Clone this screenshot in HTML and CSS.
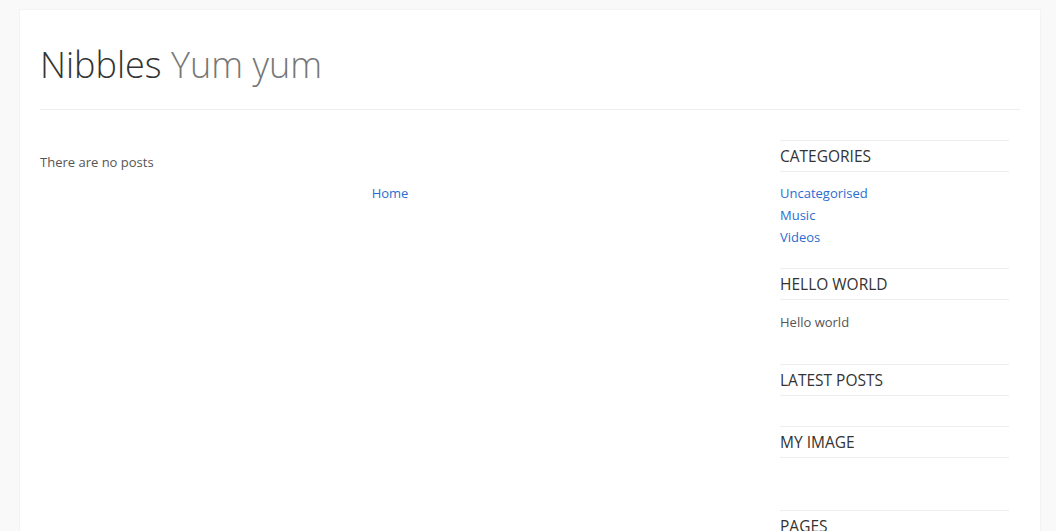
FILE: index.html
```html
<!DOCTYPE html>
<html>
    <head>
        <title>Nibbles Yum yum</title>
        <link rel="stylesheet" href="styles.css">
    </head>
<body>
    <div class="container">
        <header class="site-header">
            <h1 class="site-title">Nibbles <span class="tagline">Yum yum</span></h1>
        </header>

        <div class="content">
            <main class="main">
                <p class="no-posts">There are no posts</p>
                <div class="pager"><a href="#">Home</a></div>
            </main>

            <aside class="sidebar">
                <div class="widget">
                    <h3 class="widget-title">Categories</h3>
                    <ul class="widget-list">
                        <li><a href="#">Uncategorised</a></li>
                        <li><a href="#">Music</a></li>
                        <li><a href="#">Videos</a></li>
                    </ul>
                </div>

                <div class="widget">
                    <h3 class="widget-title">Hello World</h3>
                    <p class="widget-text">Hello world</p>
                </div>

                <div class="widget">
                    <h3 class="widget-title">Latest Posts</h3>
                    <ul class="widget-list"></ul>
                </div>

                <div class="widget">
                    <h3 class="widget-title">My Image</h3>
                    <div class="widget-image"></div>
                </div>

                <div class="widget">
                    <h3 class="widget-title">Pages</h3>
                </div>
            </aside>
        </div>
    </div>
</body>
</html>
```

FILE: styles.css
```css
body {
    font-family: "Open Sans", Arial, sans-serif;
    font-size: 13px;
    line-height: 22px;
    color: #555;
    background-color: #f9f9f9;
    margin: 0;
}

a {
    color: #2b6dd1;
    text-decoration: none;
}

.container {
    width: 980px;
    margin: 10px 0 0 20px;
    padding: 0 20px 40px;
    background-color: #fff;
    box-shadow: 0 0 0 1px #f3f3f3;
    min-height: 600px;
}

.site-header {
    border-bottom: 1px solid #eee;
    padding: 33px 0 22px;
}

.site-title {
    margin: 0;
    font-size: 36px;
    font-weight: 300;
    line-height: 44px;
    color: #333;
}

.tagline {
    color: #777;
}

.content {
    display: flex;
    gap: 40px;
    padding-top: 30px;
}

.main {
    width: 700px;
}

.no-posts {
    margin: 11px 0 9px;
}

.pager {
    text-align: center;
}

.sidebar {
    width: 229px;
}

.widget {
    display: flow-root;
    margin-bottom: 20px;
}

.widget-title {
    margin: 0 0 10px;
    padding: 4px 0;
    border-top: 1px solid #eee;
    border-bottom: 1px solid #eee;
    font-size: 15.5px;
    font-weight: 400;
    line-height: 22px;
    color: #333;
    text-transform: uppercase;
}

.widget-list {
    list-style: none;
    margin: 0;
    padding: 0;
}

.widget-text {
    margin: 11px 0;
}

.widget-image {
    height: 22px;
}
```
